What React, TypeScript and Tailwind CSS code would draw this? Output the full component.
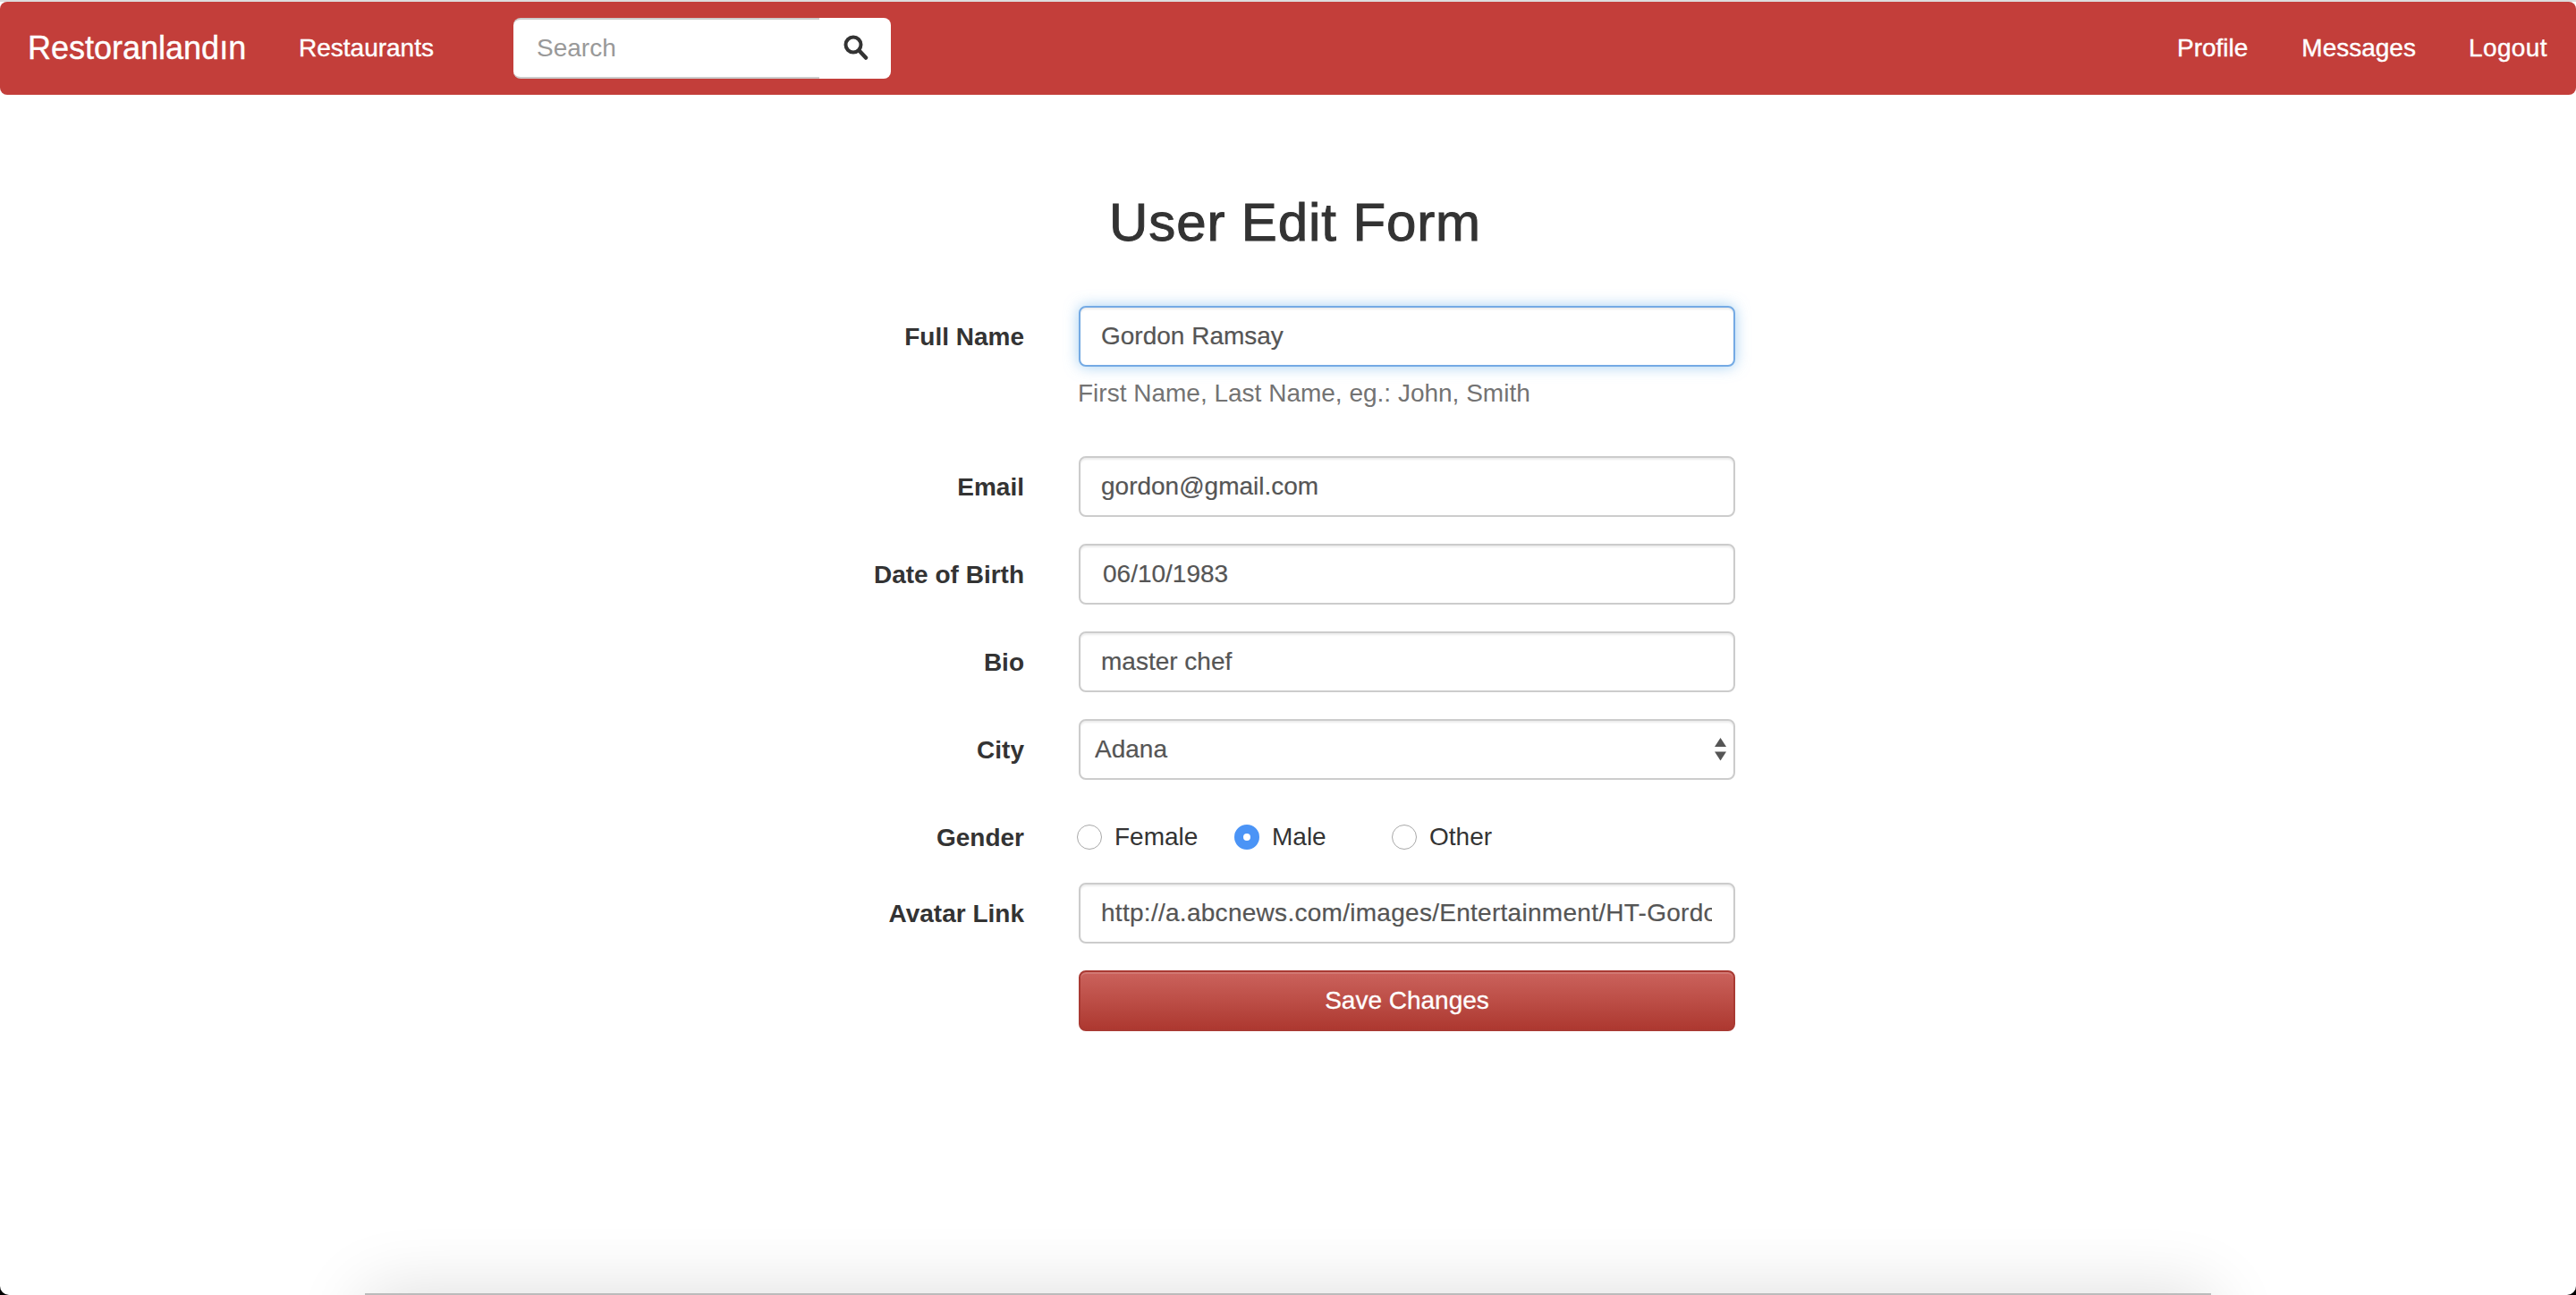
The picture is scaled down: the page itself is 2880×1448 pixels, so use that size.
import React from 'react';

const fieldBase =
  'w-full h-[68px] rounded-lg border-2 bg-white pl-[23px] pr-6 text-[28px] text-[#555] outline-none [-webkit-text-stroke:0.2px_#555]';
const inputClass = `${fieldBase} border-[#ccc] shadow-[inset_0_2px_2px_rgba(0,0,0,0.075)]`;
const labelClass = 'w-[201px] shrink-0 pt-[15px] text-right text-[28px] font-bold leading-[40px] text-[#333]';
const radioClass =
  'm-0 h-7 w-7 shrink-0 appearance-none rounded-full border border-[#a8a8a8] bg-white checked:border-[10px] checked:border-[#4b94f6]';
const navText = '[-webkit-text-stroke:0.4px_white]';

const Row: React.FC<{ label?: string; className?: string; children: React.ReactNode }> = ({ label, className, children }) => (
  <div className={`flex gap-[61px] ${className ?? 'mb-[30px]'}`}>
    <div className={labelClass}>{label}</div>
    <div className="w-[734px] shrink-0">{children}</div>
  </div>
);

const Radio: React.FC<{ label: string; checked?: boolean; className: string }> = ({ label, checked, className }) => (
  <label className={`flex items-center ${className}`}>
    <input type="radio" name="gender" defaultChecked={checked} className={radioClass} />
    <span className="ml-[14px] text-[28px] leading-[40px] text-[#333]">{label}</span>
  </label>
);

export default function App() {
  return (
    <div className="h-[1448px] bg-black font-['Liberation_Sans',Arial,sans-serif]">
      <div className="relative h-[1448px] overflow-hidden rounded-b-[10px] bg-white">
        <div className="h-[2px] bg-[#ddd]" />
        <nav className="flex h-[104px] items-center rounded-lg bg-[#c33e3a] text-white">
          <a className={`ml-[31px] w-[303px] text-[36px] leading-[40px] ${navText}`}>Restoranlandın</a>
          <a className={`w-[240px] text-[28px] leading-[40px] ${navText}`}>Restaurants</a>
          <form className="flex h-[68px] w-[422px]">
            <input
              placeholder="Search"
              className="h-full w-[342px] rounded-l-lg border-2 border-x-0 border-[#ccc] bg-white pl-[26px] text-[28px] text-[#555] outline-none placeholder:text-[#999]"
            />
            <button type="button" className="flex h-full w-[80px] items-center justify-center rounded-r-lg bg-white pb-[3px] pr-[-2px]">
              <svg className="ml-[2px]" width="28" height="28" viewBox="0 0 28 28" fill="none" stroke="#333">
                <circle cx="11" cy="11" r="8.5" strokeWidth="4" />
                <line x1="17.5" y1="17.5" x2="25" y2="25.5" strokeWidth="4.5" strokeLinecap="round" />
              </svg>
            </button>
          </form>
          <div className={`ml-auto mr-[32px] flex text-[28px] leading-[40px] ${navText}`}>
            <a className="mr-[60px]">Profile</a>
            <a className="mr-[59px]">Messages</a>
            <a className="tracking-[0.4px]">Logout</a>
          </div>
        </nav>

        <main className="ml-[944px] w-[1008px]">
          <h1 className="mb-[60px] mt-[110px] text-center text-[60px] leading-[66px] tracking-[0.9px] text-[#333] [-webkit-text-stroke:1px_#333]">
            User Edit Form
          </h1>

          <Row label="Full Name">
            <input
              defaultValue="Gordon Ramsay"
              className={`${fieldBase} border-[#74aae4] shadow-[inset_0_2px_2px_rgba(0,0,0,0.075),0_0_16px_rgba(102,175,233,0.6)]`}
            />
            <p className="-ml-px mb-5 mt-[10px] text-[28px] leading-[40px] text-[#737373]">First Name, Last Name, eg.: John, Smith</p>
          </Row>
          <Row label="Email">
            <input defaultValue="gordon@gmail.com" className={inputClass} />
          </Row>
          <Row label="Date of Birth">
            <input defaultValue="06/10/1983" className={`${inputClass} !pl-[25px]`} />
          </Row>
          <Row label="Bio">
            <input defaultValue="master chef" className={inputClass} />
          </Row>
          <Row label="City">
            <div className="relative">
              <select defaultValue="Adana" className={`${inputClass} appearance-none !pl-4`}>
                <option>Adana</option>
                <option>Ankara</option>
                <option>Istanbul</option>
              </select>
              <svg className="absolute right-[10px] top-[21px]" width="13" height="26" viewBox="0 0 13 26" fill="#555">
                <path d="M6.5 0L13 10H0z" />
                <path d="M0 15.5H13L6.5 25.5z" />
              </svg>
            </div>
          </Row>
          <Row label="Gender">
            <div className="-ml-[2px] flex h-[54px] items-end">
              <Radio label="Female" className="w-[176px]" />
              <Radio label="Male" checked className="w-[176px]" />
              <Radio label="Other" className="w-[120px]" />
            </div>
          </Row>
          <Row label="Avatar Link">
            <input
              defaultValue="http://a.abcnews.com/images/Entertainment/HT-Gordon-Ramsay-jef-170111_16x9_992.jpg"
              className={`${inputClass} tracking-[0.28px]`}
            />
          </Row>
          <Row className="mb-0">
            <button
              type="button"
              className="h-[68px] w-full rounded-lg border-2 border-[#a93a33] bg-gradient-to-b from-[#cb625c] to-[#ad3830] text-[28px] text-white shadow-[inset_0_2px_0_rgba(255,255,255,0.15)] [-webkit-text-stroke:0.3px_white]"
            >
              Save Changes
            </button>
          </Row>
        </main>

        {/* panel just under the fold, only its top edge and shadow show */}
        <div className="absolute left-[408px] top-[1446px] h-[200px] w-[2064px] bg-[#bbb] shadow-[0_0_80px_rgba(0,0,0,0.14)]" />
      </div>
    </div>
  );
}
